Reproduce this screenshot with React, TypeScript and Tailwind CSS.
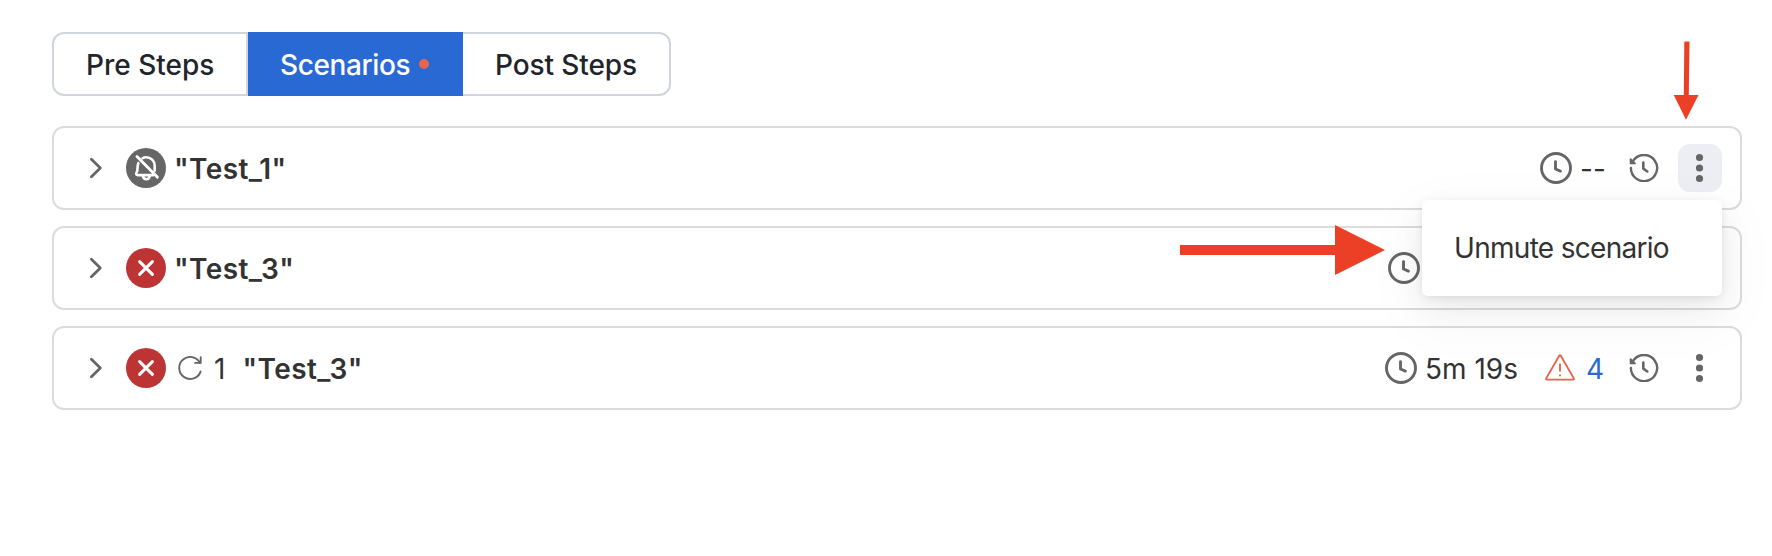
import type { ReactNode } from "react";

const Chevron = () => (
  <svg className="h-6 w-4 shrink-0" viewBox="0 0 16 24" fill="none" stroke="#666" strokeWidth="2.8" strokeLinecap="round" strokeLinejoin="round">
    <path d="M3.400 3.300 12.300 12l-8.900 8.700" />
  </svg>
);

const MutedIcon = () => (
  <svg className="size-10 shrink-0" viewBox="0 0 40 40" fill="none" stroke="#fff" strokeWidth="2.6" strokeLinecap="round" strokeLinejoin="round">
    <circle cx="20" cy="20" r="20" fill="#666" stroke="none" />
    <path d="M16.600 10.200C17.600 9.500 18.800 9.200 20 9.200c5 0 8.700 3.700 8.700 8.500v5" />
    <path d="M12.300 15.200c-.9 2.200-.7 4.800-.9 6.900-.2 1.800-1.700 3.200-1.100 4.400.3.600 1 .6 1.700.6h15.300" />
    <path d="M16.800 28c.4 2 1.700 3.200 3.500 3.200s3.100-1.200 3.500-3.200" />
    <path d="M11 8.600 31.300 29.100" strokeWidth="2.900" />
  </svg>
);

const FailedIcon = () => (
  <svg className="size-10 shrink-0" viewBox="0 0 40 40" fill="none" stroke="#fff" strokeWidth="3" strokeLinecap="round">
    <circle cx="20" cy="20" r="20" fill="#bd3434" stroke="none" />
    <path d="m13.600 13.600 12.800 12.800M26.400 13.600 13.600 26.400" />
  </svg>
);

const RetryIcon = () => (
  <svg className="size-6 shrink-0" viewBox="0 0 24 24" fill="none" stroke="#666" strokeWidth="1.900" strokeLinecap="round" strokeLinejoin="round">
    <path d="M22.600 15.600A11 11 0 1 1 21.900 6.700" />
    <path d="M22.700 1.200v5.700h-5.600" />
  </svg>
);

const ClockIcon = () => (
  <svg className="size-8 shrink-0" viewBox="0 0 32 32" fill="none" stroke="#666" strokeWidth="2.900" strokeLinecap="round" strokeLinejoin="round">
    <circle cx="16" cy="16" r="14.500" />
    <path d="M15.500 9.600v7.400l4.900 2.100" />
  </svg>
);

const HistoryIcon = () => (
  <svg className="h-7 w-[30px] shrink-0" viewBox="0 0 30 28" fill="none" stroke="#666" strokeWidth="2.400" strokeLinecap="round" strokeLinejoin="round">
    <path d="M1.900 14A13.100 13.100 0 1 0 4.500 6.200" />
    <path d="M1.600 5.200v4.200h4.300Z" fill="#666" strokeWidth="1.800" />
    <path d="M14.300 8.600v6l4 2.900" strokeWidth="2.600" />
  </svg>
);

const WarningIcon = () => (
  <svg className="h-7 w-[30px] shrink-0" viewBox="0 0 30 28" fill="none" stroke="#e6654c" strokeWidth="1.900" strokeLinecap="round" strokeLinejoin="round">
    <path d="M14.200 1.700 1.200 24.400c-.4.700 0 1.200.6 1.200h26.400c.6 0 1-.5.600-1.200L15.800 1.700c-.4-.7-1.200-.7-1.600 0Z" />
    <path d="M15 10.300v6.400M15 21.200v.3" />
  </svg>
);

const MoreButton = ({ active = false }: { active?: boolean }) => (
  <button className={`flex h-12 w-11 shrink-0 items-center justify-center rounded-xl ${active ? "bg-[#edeef3]" : ""}`}>
    <svg className="h-8 w-2 -translate-x-[0.5px]" viewBox="0 0 8 32" fill="#666">
      <circle cx="4" cy="5.500" r="3.600" />
      <circle cx="4" cy="16" r="3.600" />
      <circle cx="4" cy="26.500" r="3.600" />
    </svg>
  </button>
);

type RowProps = { icon: ReactNode; name: string; retries?: number; children?: ReactNode };

const ScenarioRow = ({ icon, name, retries, children }: RowProps) => (
  <div className="flex h-[84px] items-center rounded-xl border-2 border-[#dcdcdc] pr-[18px] pl-[34px]">
    <Chevron />
    <div className="ml-[22px] flex items-center">
      {icon}
      {retries !== undefined && (
        <span className="ml-3 flex items-center">
          <RetryIcon />
          <span className="ml-3 w-[28px] pt-px">{retries}</span>
        </span>
      )}
      <span className={`pt-px font-semibold tracking-[0.4px] ${retries !== undefined ? "ml-[0.5px]" : "ml-2"}`}>{name}</span>
    </div>
    <div className="ml-auto flex items-center">{children}</div>
  </div>
);

export default function App() {
  return (
    <main className="relative h-[556px] w-[1772px] overflow-hidden bg-white px-[52px] pt-8 font-['Inter',sans-serif] text-[28px] leading-none text-[#333]">
      <div className="flex h-16 w-[619px] font-medium text-[#21252b]">
        <button className="flex w-[196px] items-center rounded-l-xl border-2 border-[#d0d5dd] pt-px pl-8">Pre Steps</button>
        <button className="flex w-[215px] items-center bg-[#2969d3] pt-px pl-8 text-white">
          <span className="tracking-[-0.38px]">Scenarios</span>
          <span className="-mt-px ml-[9px] size-2.5 rounded-full bg-[#e6654c]" />
        </button>
        <button className="flex w-[208px] items-center rounded-r-xl border-2 border-l-0 border-[#d0d5dd] pt-px pl-8 tracking-[-0.1px]">Post Steps</button>
      </div>

      <section className="mt-[30px] flex w-[1690px] flex-col gap-4">
        <ScenarioRow icon={<MutedIcon />} name={'"Test_1"'}>
          <ClockIcon />
          <span className="ml-2 w-[49px] pt-px">--</span>
          <HistoryIcon />
          <span className="w-[19px]" />
          <MoreButton active />
        </ScenarioRow>
        <ScenarioRow icon={<FailedIcon />} name={'"Test_3"'}>
          <ClockIcon />
          <span className="w-[302px]" />
        </ScenarioRow>
        <ScenarioRow icon={<FailedIcon />} name={'"Test_3"'} retries={1}>
          <ClockIcon />
          <span className="ml-2 w-[120px] pt-px">5m 19s</span>
          <WarningIcon />
          <span className="ml-[11px] w-[43px] pt-px text-[#2969d3]">4</span>
          <HistoryIcon />
          <span className="w-[19px]" />
          <MoreButton />
        </ScenarioRow>
      </section>

      <div className="absolute top-[200px] left-[1422px] flex h-24 w-[300px] items-center rounded-md bg-white pl-8 shadow-[0_2px_10px_-2px_rgba(0,0,0,0.12),0_12px_32px_0_rgba(0,0,0,0.06),0_18px_56px_12px_rgba(0,0,0,0.03)]">
        <span className="tracking-[-0.7px]">Unmute scenario</span>
      </div>

      <svg className="pointer-events-none absolute top-0 left-0 h-[556px] w-[1772px]" viewBox="0 0 1772 556" fill="#ec4026">
        <path d="M1684.300 41.500h5.200l-.7 53.500h9.700L1686 119.700 1673.700 95h10.100Z" />
        <path d="M1180 245h155v-20l50 25-50 25v-20h-155Z" />
      </svg>
    </main>
  );
}
